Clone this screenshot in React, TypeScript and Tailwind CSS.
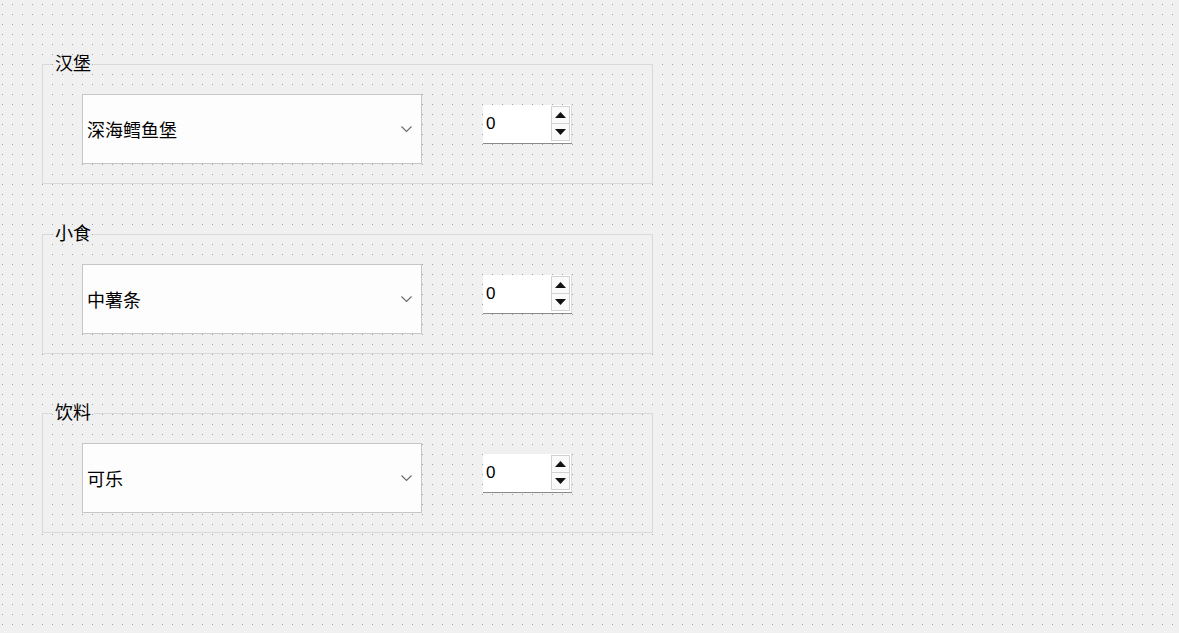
import React from 'react';

interface GroupProps {
  title: string;
  value: string;
  className?: string;
}

const cjk = "font-['Noto_Sans_CJK_SC','Noto_Sans',sans-serif]";

const Chevron = () => (
  <svg width="11" height="7" viewBox="0 0 11 7" className="shrink-0">
    <polyline points="0.5,0.5 5.5,5.5 10.5,0.5" fill="none" stroke="#6a6a6a" strokeWidth="1.1" />
  </svg>
);

const Triangle = ({ up }: { up?: boolean }) => (
  <svg width="11" height="6" viewBox="0 0 11 6">
    <polygon points={up ? '5.5,0 11,6 0,6' : '0,0 11,0 5.5,6'} fill="#111" />
  </svg>
);

const SpinBox = () => (
  <div className="flex w-[89px] h-[39px] bg-white border-b border-[#8a8a8a] mt-[11px]">
    <div className="flex-1 flex items-center pl-[3px] text-[17px] text-black font-['Liberation_Sans',sans-serif]">
      0
    </div>
    <div className="w-[21px] flex flex-col pt-[1px] pr-[1px] border-r border-[#dcdcdc]">
      <div className="h-[18px] flex items-center justify-center border border-[#d2d2d2] bg-[#fafafa]">
        <Triangle up />
      </div>
      <div className="h-[17px] flex items-center justify-center border border-t-0 border-[#d2d2d2] bg-[#fafafa]">
        <Triangle />
      </div>
    </div>
  </div>
);

const Group: React.FC<GroupProps> = ({ title, value, className }) => (
  <fieldset className={`w-[611px] p-0 m-0 border border-[#d9d9d9] ${className ?? ''}`}>
    <legend className={`ml-[9px] px-[3px] text-[18px] leading-[21px] text-black ${cjk}`}>
      <span className="relative -top-[2px]">{title}</span>
    </legend>
    <div className="flex items-start gap-[61px] pt-[19px] pb-[19px] pl-[39px]">
      <div className="w-[340px] h-[70px] flex items-center justify-between bg-[#fdfdfd] border border-[#c6c6c6] pl-[4px] pr-[9px]">
        <span className={`text-[18px] text-black ${cjk}`}>{value}</span>
        <Chevron />
      </div>
      <SpinBox />
    </div>
  </fieldset>
);

export default function App() {
  return (
    <div className="w-full min-h-[633px] bg-[#f0f0f0] [background-image:conic-gradient(at_1px_1px,transparent_75%,#a0a0a0_0)] [background-size:10px_10px] [background-position:2px_4px] pt-[54px] pl-[42px]">
      <Group title="汉堡" value="深海鳕鱼堡" />
      <Group title="小食" value="中薯条" className="mt-[40px]" />
      <Group title="饮料" value="可乐" className="mt-[49px]" />
    </div>
  );
}
